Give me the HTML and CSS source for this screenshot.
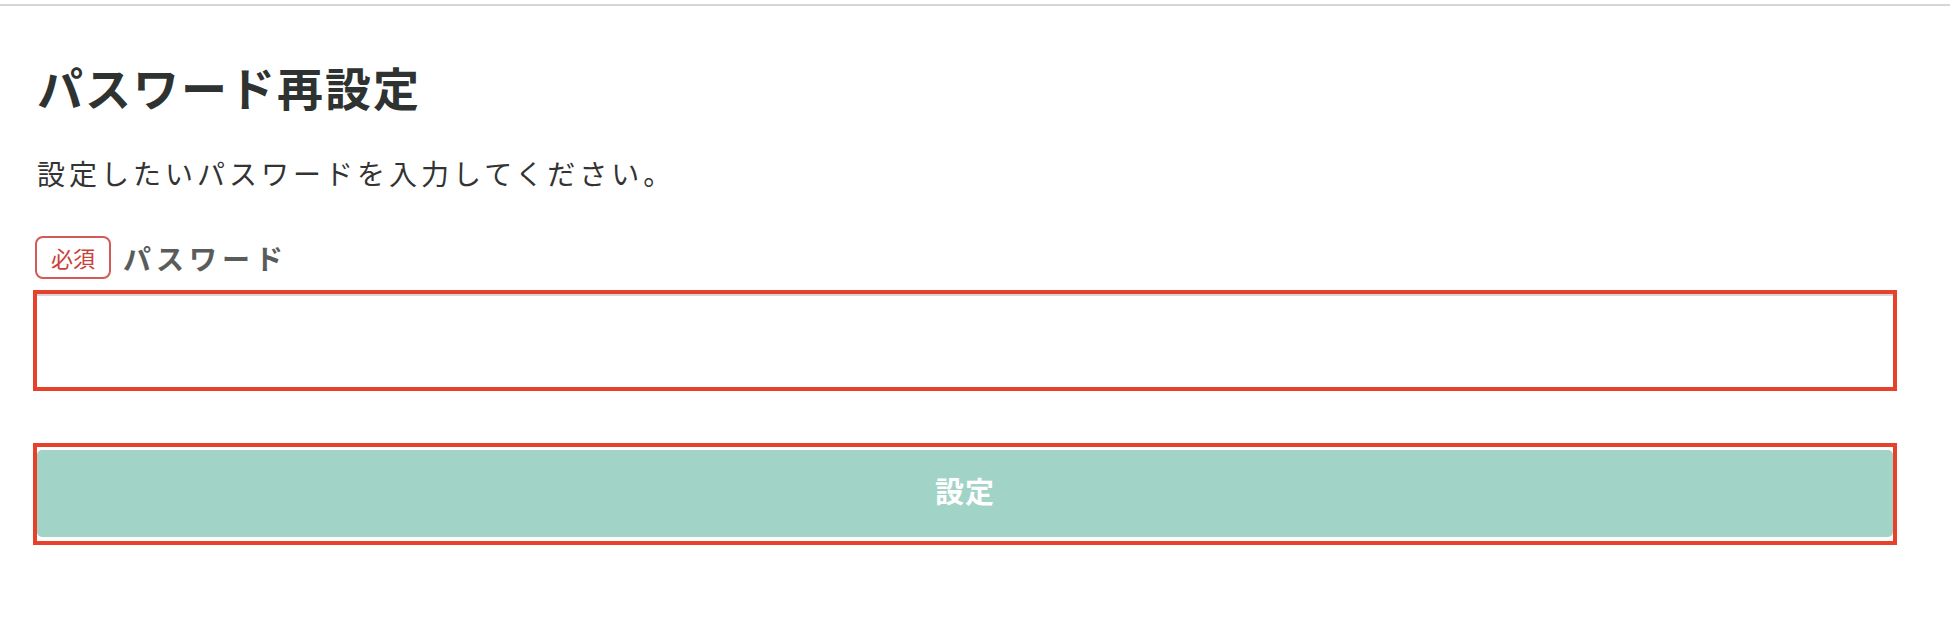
FILE: index.html
```html
<!DOCTYPE html>
<html lang="ja">
<head>
<meta charset="utf-8">
<title>パスワード再設定</title>
<link rel="stylesheet" href="styles.css">
</head>
<body>
<div class="topline"></div>
<main class="page">
  <h1 class="title">パスワード再設定</h1>
  <p class="lead">設定したいパスワードを入力してください。</p>
  <div class="field-label">
    <span class="badge">必須</span>
    <span class="label-text">パスワード</span>
  </div>
  <div class="highlight input-wrap">
    <input class="input" type="password" aria-label="パスワード">
  </div>
  <div class="highlight button-wrap">
    <button class="submit" type="button">設定</button>
  </div>
</main>
</body>
</html>
```

FILE: styles.css
```css
html, body {
  margin: 0;
  padding: 0;
  background: #ffffff;
}
body {
  font-family: "Noto Sans CJK JP", "Noto Sans", sans-serif;
  color: #333333;
}
.topline {
  height: 4px;
  border-bottom: 2px solid #d4d7d7;
}
.page {
  padding: 0 53px 0 33px;
  display: flex;
  flex-direction: column;
}
.title {
  margin: 50px 0 0 4px;
  font-size: 46px;
  line-height: 60px;
  font-weight: 700;
  letter-spacing: 2px;
  color: #2e3331;
}
.lead {
  margin: 37px 0 0 4px;
  font-size: 28px;
  line-height: 40px;
  letter-spacing: 4px;
  color: #333333;
}
.field-label {
  margin-top: 43px;
  display: flex;
  align-items: center;
  gap: 12px;
  margin-left: 2px;
  height: 43px;
}
.badge {
  box-sizing: border-box;
  width: 76px;
  height: 43px;
  border: 2px solid #d25b55;
  border-radius: 8px;
  color: #c9413b;
  font-size: 22px;
  line-height: 39px;
  text-align: center;
}
.label-text {
  font-size: 28px;
  font-weight: 700;
  letter-spacing: 5px;
  color: #5a5c5c;
  line-height: 40px;
}
.highlight {
  border: 4px solid #e8412b;
}
.input-wrap {
  margin-top: 11px;
  display: flex;
}
.input {
  flex: 1;
  box-sizing: border-box;
  height: 93px;
  margin: 0;
  border: none;
  border-top: 2px solid #d3d8d8;
  background: #ffffff;
  outline: none;
  font-size: 28px;
  padding: 0 16px;
}
.button-wrap {
  margin-top: 52px;
  padding: 3px 0 4px;
  display: flex;
}
.submit {
  flex: 1;
  box-sizing: border-box;
  height: 87px;
  padding: 0 0 8px;
  border: none;
  border-radius: 5px;
  background: #a1d3c6;
  color: #ffffff;
  font-family: "Noto Sans CJK JP", sans-serif;
  font-size: 29px;
  font-weight: 700;
  letter-spacing: 1px;
}
```
